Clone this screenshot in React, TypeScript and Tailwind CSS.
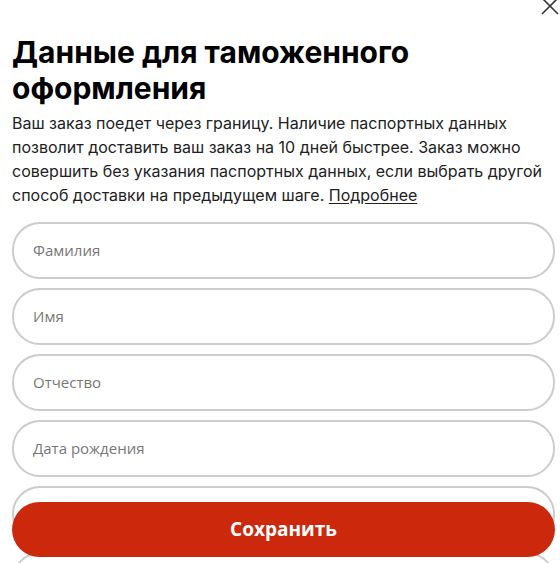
import React from "react";

const fields = ["Фамилия", "Имя", "Отчество", "Дата рождения", "", ""];

export default function App() {
  return (
    <div className="relative h-[563px] w-[560px] overflow-hidden bg-white">
      {/* close */}
      <button className="absolute right-[-2px] top-[-6px] h-6 w-6 text-[#333]">
        <svg viewBox="0 0 24 24" className="h-6 w-6" fill="none" stroke="currentColor" strokeWidth="1.6">
          <path d="M4 4l16 16M20 4L4 20" />
        </svg>
      </button>

      <div className="px-3 pt-[34px]">
        <h1 className="font-['Inter',sans-serif] text-[30px] font-bold leading-[36px] text-black">
          Данные для таможенного
          <br />
          оформления
        </h1>
        <p className="mt-[5px] font-['Inter',sans-serif] text-[16px] leading-[24px] text-[#222]">
          Ваш заказ поедет через границу. Наличие паспортных данных позволит доставить ваш заказ на 10 дней быстрее. Заказ можно совершить без указания паспортных данных, если выбрать другой способ доставки на предыдущем шаге.{" "}
          <a href="#" className="underline underline-offset-2">
            Подробнее
          </a>
        </p>

        <div className="mt-[15px] flex w-[543px] flex-col gap-[9px]">
          {fields.map((f, i) => (
            <div
              key={i}
              className="flex h-[57px] items-center rounded-[28px] border-2 border-[#cccccc] px-[19px] font-['Open_Sans',sans-serif] text-[15px] text-[#777]"
            >
              {f}
            </div>
          ))}
        </div>
      </div>

      <button className="absolute bottom-[6px] left-3 flex h-[55px] w-[543px] items-center justify-center rounded-[28px] bg-[#cc290c] font-['Open_Sans',sans-serif] text-[19px] font-bold text-white">
        Сохранить
      </button>
    </div>
  );
}
